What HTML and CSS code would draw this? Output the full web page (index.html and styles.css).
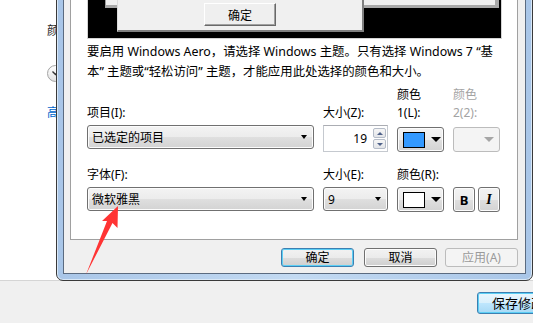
FILE: index.html
```html
<!DOCTYPE html>
<html lang="zh-CN">
<head>
    <meta charset="UTF-8">
    <meta name="viewport" content="width=device-width, initial-scale=1.0">
    <title>窗口颜色和外观</title>
    <link rel="stylesheet" href="styles.css">
</head>
<body>
<div class="page">
    <div class="page-main">
        <div class="side">
            <div class="side-title">颜色</div>
            <div class="side-toggle">
                <svg width="7" height="5" viewBox="0 0 7 5"><path d="M0.5 0.5 L3.5 3.5 L6.5 0.5" fill="none" stroke="#333" stroke-width="1.4"/></svg>
            </div>
            <a class="side-link">高级外观设置...</a>
        </div>
    </div>
    <div class="page-bar">
        <button type="button" class="btn btn-default save-btn">保存修改</button>
    </div>
</div>

<div class="dialog">
    <div class="dialog-body">
        <div class="panel">
            <div class="preview">
                <div class="mini-win mini-back"></div>
                <div class="mini-win mini-front">
                    <button type="button" class="mini-btn">确定</button>
                </div>
            </div>

            <p class="note">要启用 Windows Aero，请选择 Windows 主题。只有选择 Windows 7 “基<br>本” 主题或“轻松访问” 主题，才能应用此处选择的颜色和大小。</p>

            <div class="row row-item">
                <span class="lbl">项目(I):</span>
                <span class="lbl">大小(Z):</span>
                <span class="lbl">颜色<br>1(L):</span>
                <span class="lbl off">颜色<br>2(2):</span>

                <div class="combo">已选定的项目</div>
                <div class="spin">
                    <span class="spin-val">19</span>
                    <div class="spin-btns">
                        <span class="spin-btn up"></span>
                        <span class="spin-btn down"></span>
                    </div>
                </div>
                <div class="pick"><span class="swatch swatch-blue"></span><span class="drop"></span></div>
                <div class="pick off"><span class="drop"></span></div>
            </div>

            <div class="row row-font">
                <span class="lbl">字体(F):</span>
                <span class="lbl">大小(E):</span>
                <span class="lbl">颜色(R):</span>
                <span class="lbl"></span>

                <div class="combo">微软雅黑</div>
                <div class="combo">9</div>
                <div class="pick"><span class="swatch swatch-white"></span><span class="drop"></span></div>
                <div class="styles">
                    <div class="style-btn bold">B</div>
                    <div class="style-btn italic">I</div>
                </div>
            </div>
        </div>

        <div class="dialog-foot">
            <button type="button" class="btn btn-default btn-ok">确定</button>
            <button type="button" class="btn">取消</button>
            <button type="button" class="btn" disabled>应用(A)</button>
        </div>
    </div>
</div>

<svg class="arrow" width="45" height="80" viewBox="80 200 45 80">
    <polygon points="118,206 117.5,228 112.5,223 86,274.5 107,221 102,221" fill="#ff3434"/>
</svg>
</body>
</html>
```

FILE: styles.css
```css
* {
    box-sizing: border-box;
}

body {
    margin: 0;
    width: 533px;
    height: 323px;
    overflow: hidden;
    position: relative;
    font-family: "Noto Sans", "Noto Sans CJK SC", sans-serif;
    font-size: 12px;
    color: #000;
    background-color: #fff;
}

/* buttons */
.btn {
    height: 19px;
    width: 73px;
    padding: 0;
    font-family: inherit;
    font-size: 12px;
    line-height: 16px;
    color: #000;
    border: 1px solid #707070;
    border-radius: 3px;
    background: linear-gradient(#f2f2f2 0%, #ebebeb 50%, #dddddd 51%, #cfcfcf 100%);
    box-shadow: inset 0 0 0 1px #fcfcfc;
}

.btn-default {
    border-color: #3c7fb1;
    box-shadow: inset 0 0 0 1px #5ccff5;
}

.btn[disabled] {
    color: #9a9a9a;
    border-color: #bcbcbc;
    background: #f4f4f4;
    box-shadow: none;
}

/* page behind the dialog */
.page {
    display: flex;
    flex-direction: column;
    height: 323px;
}

.page-main {
    flex: 1;
    background-color: #fff;
    border-bottom: 1px solid #d5d5d5;
}

.side {
    padding: 24px 0 0 47px;
}

.side-title {
    line-height: 14px;
    color: #1e1e1e;
}

.side-toggle {
    display: flex;
    align-items: center;
    justify-content: center;
    width: 17px;
    height: 17px;
    margin-top: 27px;
    border: 1px solid #a3a3a3;
    border-radius: 50%;
    background: linear-gradient(#ffffff, #e2e2e2);
}

.side-link {
    display: block;
    margin-top: 24px;
    line-height: 14px;
    color: #0066cc;
}

.page-bar {
    flex: none;
    display: flex;
    height: 42px;
    padding: 11px 0 0 477px;
    background-color: #f0f0f0;
    overflow: hidden;
}

.page-bar .save-btn {
    flex: none;
    width: 86px;
    height: 22px;
    padding-left: 14px;
    text-align: left;
    font-size: 13px;
    line-height: 18px;
    background: linear-gradient(#eaf6fd 0%, #d9f0fc 50%, #bee6fd 51%, #a7d9f5 100%);
}

/* dialog window */
.dialog {
    position: absolute;
    left: 56px;
    top: -60px;
    width: 477px;
    padding: 0 6px 6px;
    border: 1px solid #3a3a3a;
    border-radius: 0 0 7px 7px;
    background: linear-gradient(90deg, #a9c6e8, #c3daf2 50%, #a9c6e8);
    box-shadow: inset 1px 0 #d9e8f7, inset -1px 0 #d9e8f7, inset 0 -1px #d9e8f7;
    z-index: 10;
}

.dialog-body {
    padding: 6px 7px 6px 6px;
    border: 1px solid #5b6b80;
    background-color: #f0f0f0;
}

.panel {
    padding: 12px 15px 27px 16px;
    border: 1px solid #a0a0a0;
    background-color: #fff;
}

.preview {
    position: relative;
    height: 78px;
    border: 1px solid #d4d4d4;
    background-color: #000;
    overflow: hidden;
}

.mini-win {
    position: absolute;
    top: 0;
    background-color: #f0f0f0;
}

.mini-back {
    left: 17px;
    width: 394px;
    height: 46px;
    border-left: 1px solid #9c9c9c;
    border-right: 4px solid #a9a9a9;
    border-bottom: 3px solid #a9a9a9;
}

.mini-front {
    left: 29px;
    width: 247px;
    height: 70px;
    display: flex;
    justify-content: center;
    align-items: flex-end;
    padding-bottom: 4px;
    border-left: 1px solid #dcdcdc;
    border-right: 2px solid #808080;
    border-bottom: 2px solid #808080;
}

.mini-btn {
    width: 72px;
    height: 23px;
    padding: 0;
    font-family: inherit;
    font-size: 12px;
    color: #000;
    background-color: #efefef;
    border: 1px solid;
    border-color: #fff #696969 #696969 #fff;
    box-shadow: inset -1px -1px #a0a0a0;
}

.note {
    margin: 3px 0 0;
    font-size: 12.4px;
    line-height: 20px;
    white-space: nowrap;
}

/* form rows */
.row {
    display: grid;
    grid-template-columns: 227px 65px 47px 47px;
    column-gap: 9px;
    row-gap: 3px;
    align-items: start;
}

.row-item {
    margin-top: 4px;
}

.row-font {
    margin-top: 14px;
}

.lbl {
    align-self: end;
    line-height: 18px;
    color: #000;
}

.lbl.off {
    color: #a3a3a3;
}

.combo {
    display: flex;
    align-items: center;
    justify-content: space-between;
    height: 24px;
    padding: 0 6px 0 4px;
    border: 1px solid #707070;
    border-radius: 3px;
    background: linear-gradient(#f3f3f3 0%, #ececec 50%, #dfdfdf 51%, #d3d3d3 100%);
    box-shadow: inset 0 0 0 1px #fcfcfc;
}

.combo::after {
    content: "";
    border-left: 3.5px solid transparent;
    border-right: 3.5px solid transparent;
    border-top: 4px solid #000;
}

.spin {
    display: flex;
    align-items: center;
    height: 27px;
    border: 1px solid #c5c9cf;
    border-top-color: #abadb3;
    background-color: #fff;
}

.spin-val {
    flex: 1;
    text-align: right;
    padding-right: 6px;
}

.spin-btns {
    display: flex;
    flex-direction: column;
    gap: 1px;
    width: 13px;
    margin-right: 1px;
}

.spin-btn {
    display: flex;
    align-items: center;
    justify-content: center;
    height: 10px;
    border: 1px solid #b5bcc8;
    border-radius: 2px;
    background: linear-gradient(#f6f6f6, #e2e4e8);
}

.spin-btn::after {
    content: "";
    border-left: 3px solid transparent;
    border-right: 3px solid transparent;
}

.spin-btn.up::after {
    border-bottom: 3px solid #4e6189;
}

.spin-btn.down::after {
    border-top: 3px solid #4e6189;
}

.pick {
    display: flex;
    align-items: center;
    gap: 6px;
    height: 25px;
    margin-top: 2px;
    padding-left: 5px;
    border: 1px solid #707070;
    border-radius: 3px;
    background: linear-gradient(#f3f3f3 0%, #ececec 50%, #dfdfdf 51%, #d3d3d3 100%);
    box-shadow: inset 0 0 0 1px #fcfcfc;
}

.row-font .pick {
    margin-top: 0;
}

.pick.off {
    justify-content: flex-end;
    padding-right: 5px;
    border-color: #bcbcbc;
    background: #f4f4f4;
    box-shadow: none;
}

.swatch {
    width: 22px;
    height: 16px;
    border: 1px solid #000;
}

.swatch-blue {
    background-color: #3399ff;
}

.swatch-white {
    background-color: #fff;
}

.drop {
    border-left: 5px solid transparent;
    border-right: 5px solid transparent;
    border-top: 5px solid #000;
}

.pick.off .drop {
    border-top-color: #a6a6a6;
}

.styles {
    display: flex;
    gap: 3px;
}

.style-btn {
    display: flex;
    align-items: center;
    justify-content: center;
    width: 22px;
    height: 25px;
    border: 1px solid #707070;
    border-radius: 3px;
    background: linear-gradient(#f3f3f3 0%, #ececec 50%, #dfdfdf 51%, #d3d3d3 100%);
    box-shadow: inset 0 0 0 1px #fcfcfc;
    font-weight: bold;
}

.style-btn.bold {
    font-size: 13px;
}

.style-btn.italic {
    font-family: "Liberation Serif", serif;
    font-style: italic;
    font-size: 14px;
}

.dialog-foot {
    display: flex;
    justify-content: flex-end;
    gap: 8px;
    margin-top: 8px;
}

.btn-ok {
    margin-right: 2px;
}

/* red marker drawn on the screenshot */
.arrow {
    position: absolute;
    left: 80px;
    top: 200px;
    z-index: 20;
}
```
